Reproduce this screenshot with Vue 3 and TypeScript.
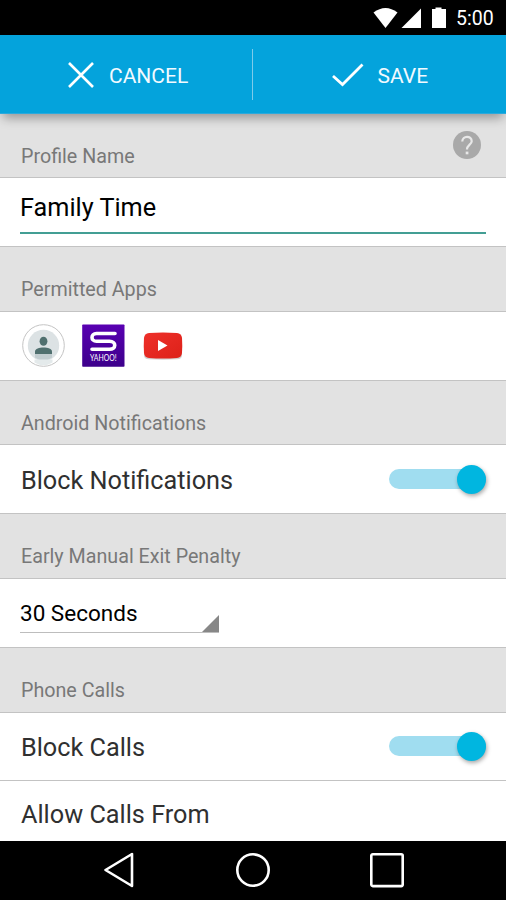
<script setup lang="ts">
import { ref } from 'vue'

const profileName = ref<string>('Family Time')
const penalty = ref<string>('30 Seconds')
const blockNotifications = ref<boolean>(true)
const blockCalls = ref<boolean>(true)
</script>

<template>
  <div class="screen">
    <div class="status">
      <svg class="status-icons" width="76" height="22" viewBox="0 0 76 22">
        <path d="M.5 5.5Q12.500-3.500 24.500 5.500L12.500 21Z" fill="#fff" />
        <path d="M28.500 21H48V1.500Z" fill="#fff" />
        <path d="M59 2h3.500V.5h6V2H73v19H59Z" fill="#fff" />
      </svg>
      <span class="clock">5:00</span>
    </div>

    <header class="actions">
      <button class="action cancel">
        <svg width="28" height="28" viewBox="0 0 28 28">
          <path d="M2 2 26 26M26 2 2 26" stroke="#fff" stroke-width="2.600" fill="none" />
        </svg>
        <span>CANCEL</span>
      </button>
      <i class="divider"></i>
      <button class="action save">
        <svg width="32" height="24" viewBox="0 0 32 24">
          <path d="M1 13 10.500 21.500 30.500 1.500" stroke="#fff" stroke-width="2.800" fill="none" />
        </svg>
        <span>SAVE</span>
      </button>
    </header>

    <main class="content">
      <div class="label first">
        <span>Profile Name</span>
        <svg class="help" width="28" height="28" viewBox="0 0 28 28">
          <circle cx="14" cy="14" r="14" fill="#a9a9a9" />
          <path d="M9.300 10.500C9.300 4.300 18.700 4.300 18.700 10.200C18.700 13.500 14 14 14 18.500" fill="none" stroke="#e8e8e8" stroke-width="2.200" />
          <rect x="12.700" y="20.600" width="2.700" height="2.700" fill="#e8e8e8" />
        </svg>
      </div>
      <div class="row name-row">
        <div class="field">{{ profileName }}</div>
      </div>

      <div class="label"><span>Permitted Apps</span></div>
      <div class="row apps">
        <svg width="44" height="44" viewBox="0 0 44 44">
          <circle cx="22.500" cy="21.500" r="20.800" fill="#fff" stroke="#c4c4c4" />
          <circle cx="22.500" cy="21.500" r="15.700" fill="#dce2e4" />
          <path d="M14 30h17v3.500Q22.500 40 14 33.500Z" fill="#c2cdd0" />
          <path d="M13.500 35.500h18v3Q22.500 44 13.500 38.500Z" fill="#e4eaeb" />
          <ellipse cx="22.500" cy="17.200" rx="3.900" ry="4.500" fill="#50706f" />
          <path d="M14 30V27.500C14 22.300 31 22.300 31 27.500V30Z" fill="#50706f" />
        </svg>
        <svg width="43" height="43" viewBox="0 0 43 43">
          <defs>
            <linearGradient id="violet" x1="0" y1="0" x2="0" y2="1">
              <stop offset="0" stop-color="#5900b2" />
              <stop offset="1" stop-color="#3d008b" />
            </linearGradient>
          </defs>
          <rect x=".2" y=".4" width="42.300" height="42.300" rx=".8" fill="url(#violet)" />
          <path d="M33 9.500H14.500C8.500 9.500 8.500 17.300 14.500 17.300H27.500C34.500 17.300 34.500 25.300 27.500 25.300H10" fill="none" stroke="#fff" stroke-width="3.600" stroke-linecap="round" />
          <text x="8" y="36.800" textLength="26.500" lengthAdjust="spacingAndGlyphs" class="yahoo">YAHOO!</text>
        </svg>
        <svg width="40" height="30" viewBox="0 0 40 30">
          <defs>
            <linearGradient id="red" x1="0" y1="0" x2="1" y2="1">
              <stop offset="0" stop-color="#ee302a" />
              <stop offset="1" stop-color="#dd2119" />
            </linearGradient>
          </defs>
          <path d="M1 5V23Q1 27.300 6 27.300Q20 28 34 27.300Q39 27.300 39 23V5Z" fill="#d2d2d2" />
          <path d="M6 1Q20 0 34 1Q38.500 1.500 39 6Q39.500 13.500 39 21Q38.500 25.500 34 26Q20 27 6 26Q1.500 25.500 1 21Q.5 13.500 1 6Q1.500 1.500 6 1Z" fill="url(#red)" />
          <path d="M15 8V19L24.500 13.500Z" fill="#fff" />
        </svg>
      </div>

      <div class="label short"><span>Android Notifications</span></div>
      <div class="row toggle-row notifications">
        <span class="title">Block Notifications</span>
        <i class="switch" :class="{ on: blockNotifications }"></i>
      </div>

      <div class="label"><span>Early Manual Exit Penalty</span></div>
      <div class="row select-row">
        <div class="select">
          <span>{{ penalty }}</span>
          <svg width="17" height="17" viewBox="0 0 17 17"><path d="M17 0V17H0Z" fill="#878787" /></svg>
        </div>
      </div>

      <div class="label"><span>Phone Calls</span></div>
      <div class="row toggle-row calls">
        <span class="title">Block Calls</span>
        <i class="switch" :class="{ on: blockCalls }"></i>
      </div>
      <div class="row last">
        <span class="title">Allow Calls From</span>
      </div>
    </main>

    <nav class="navbar">
      <svg width="30" height="36" viewBox="0 0 30 36">
        <path d="M1.500 18 28 2V34Z" fill="none" stroke="#fff" stroke-width="2.600" stroke-linejoin="round" />
      </svg>
      <svg width="36" height="36" viewBox="0 0 36 36">
        <circle cx="18" cy="18" r="15.700" fill="none" stroke="#fff" stroke-width="2.600" />
      </svg>
      <svg width="36" height="36" viewBox="0 0 36 36">
        <rect x="2.300" y="2.300" width="31.400" height="31.800" rx="1.500" fill="none" stroke="#fff" stroke-width="2.600" />
      </svg>
    </nav>
  </div>
</template>

<style>
body {
  margin: 0;
  overflow: hidden;
}
</style>

<style scoped>
.screen {
  width: 506px;
  height: 900px;
  display: flex;
  flex-direction: column;
  background: #e2e2e2;
  font-family: Roboto, "Liberation Sans", sans-serif;
  overflow: hidden;
}
svg {
  display: block;
  flex: none;
}
.status {
  flex: none;
  box-sizing: border-box;
  height: 35px;
  padding: 7px 12px 0 0;
  display: flex;
  justify-content: flex-end;
  gap: 7px;
  background: #000;
  color: #fff;
}
.clock {
  width: 37px;
  margin-right: 1px;
  font-size: 19.500px;
  line-height: 24px;
  white-space: nowrap;
}
.actions {
  flex: none;
  position: relative;
  z-index: 1;
  box-sizing: border-box;
  height: 79px;
  display: flex;
  align-items: center;
  background: #04a3dc;
  border-bottom: 1px solid #2ba9dc;
  box-shadow: 0 7px 10px -3px rgba(0, 0, 0, 0.34);
}
.action {
  box-sizing: border-box;
  flex: 1 1 50%;
  min-width: 0;
  height: 100%;
  border: 0;
  background: none;
  padding: 2px 0 0;
  display: flex;
  align-items: center;
  color: #f2faff;
  font: 400 21px/26px Roboto, "Liberation Sans", sans-serif;
}
.action span {
  padding-top: 1px;
}
.action.cancel {
  padding-left: 67px;
  gap: 14px;
}
.action.save {
  padding-left: 79px;
  gap: 13px;
}
.divider {
  flex: none;
  width: 1px;
  height: 51px;
  background: #7fcbea;
}
.content {
  flex: none;
  height: 727px;
  overflow: hidden;
}
.label {
  box-sizing: border-box;
  height: 64px;
  padding: 30px 25px 0 21px;
  display: flex;
  justify-content: space-between;
  color: #787878;
  font-size: 19.700px;
  line-height: 26px;
}
.label.first,
.label.short {
  height: 63px;
}
.help {
  margin-top: -13px;
}
.row {
  box-sizing: border-box;
  height: 70px;
  background: #fff;
  border-top: 1px solid #c3c3c3;
  border-bottom: 1px solid #c3c3c3;
  display: flex;
  align-items: center;
}
.name-row {
  padding: 0 20px;
  align-items: flex-start;
}
.field {
  flex: 1;
  height: 54px;
  border-bottom: 2px solid #439e94;
  font-size: 25.250px;
  line-height: 59px;
  color: #000;
}
.apps {
  padding: 0 0 1px 21px;
}
.apps svg + svg {
  margin-left: 17px;
}
.apps svg:last-child {
  margin-left: 18px;
  margin-top: 2px;
}
.yahoo {
  font: 400 8.800px Lato, sans-serif;
  fill: #fff;
}
.toggle-row {
  padding: 0 20px 0 21px;
  justify-content: space-between;
}
.title {
  font-size: 25.250px;
  line-height: 30px;
  padding-top: 2px;
  color: #303030;
}
.notifications .title {
  padding-top: 4px;
}
.switch {
  position: relative;
  width: 97px;
  height: 20px;
  border-radius: 10px;
  background: #dcdcdc;
}
.switch::after {
  content: "";
  position: absolute;
  top: -4px;
  left: 0;
  width: 29px;
  height: 29px;
  border-radius: 50%;
  background: #fafafa;
  box-shadow: 1px 2px 4px rgba(0, 0, 0, 0.35);
}
.switch.on {
  background: #a0ddf0;
}
.switch.on::after {
  left: 68px;
  background: #00b6e0;
}
.calls .switch {
  margin-bottom: 1px;
}
.select-row {
  padding-left: 20px;
  align-items: flex-start;
}
.select {
  width: 199px;
  height: 53px;
  border-bottom: 1px solid #bdbdbd;
  display: flex;
  justify-content: space-between;
  align-items: flex-end;
  font-size: 22.500px;
  line-height: 38px;
  color: #000;
}
.calls {
  height: 69px;
}
.row.last {
  height: 65px;
  padding-left: 21px;
  border: 0;
}
.navbar {
  flex: 1;
  background: #000;
  display: flex;
  align-items: center;
  box-sizing: border-box;
  padding: 0 0 1px 104px;
}
.navbar svg + svg {
  margin-left: 101px;
}
.navbar svg:last-child {
  margin-left: 98px;
}
</style>
